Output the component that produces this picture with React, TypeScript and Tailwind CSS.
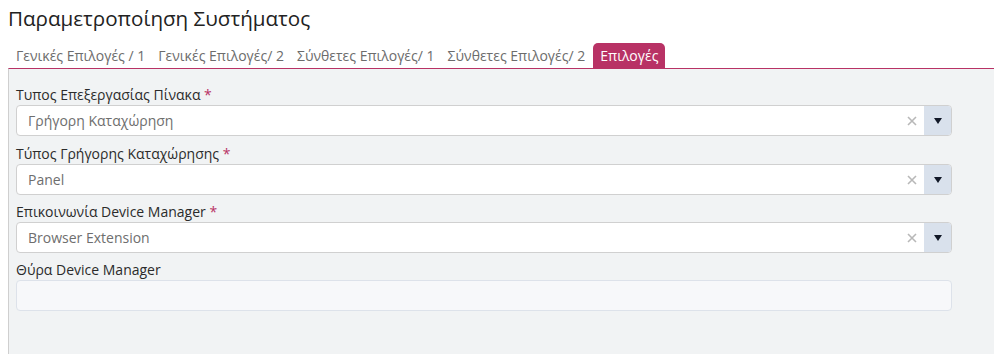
import React from "react";

const tabs = ["Γενικές Επιλογές / 1", "Γενικές Επιλογές/ 2", "Σύνθετες Επιλογές/ 1", "Σύνθετες Επιλογές/ 2"];

function Select({ value }: { value: string }) {
  return (
    <div className="flex h-[31px] w-[936px] items-stretch overflow-hidden rounded-[4px] border border-[#d0d0d0] bg-white">
      <div className="flex flex-1 items-center pl-[11px] text-[14px] text-[#6e6e6e]">{value}</div>
      <div className="flex w-[24px] items-center justify-center text-[#b5b5b5]">
        <svg width="10" height="10" viewBox="0 0 10 10">
          <path d="M1 1L9 9M9 1L1 9" stroke="#b8b8b8" strokeWidth="1.6" />
        </svg>
      </div>
      <div className="flex w-[27px] items-center justify-center bg-[#d9e1ec]">
        <svg width="8" height="6" viewBox="0 0 8 6">
          <path d="M0 0H8L4 6Z" fill="#111827" />
        </svg>
      </div>
    </div>
  );
}

function Label({ text, req }: { text: string; req?: boolean }) {
  return (
    <div className="h-[20px] text-[14px] leading-[20px] text-[#2b2b2b]">
      {text}
      {req && <span className="text-[#b83265]"> *</span>}
    </div>
  );
}

export default function App() {
  return (
    <div className="h-[354px] w-[994px] bg-white pl-[8px]" style={{ fontFamily: '"Open Sans", sans-serif' }}>
      <div className="h-[38px] pt-[2px] text-[20.6px] leading-[32px] text-[#222]">Παραμετροποίηση Συστήματος</div>
      <div className="flex h-[30px] items-end">
        <div className="flex h-[25px] items-center gap-[13px] pl-[8px] pr-[8px] text-[14px] text-[#6c6c6c]">
          {tabs.map((t) => (
            <span key={t}>{t}</span>
          ))}
        </div>
        <div className="flex h-[25px] items-center rounded-t-[5px] bg-[#b83265] px-[7px] text-[14px] text-white">Επιλογές</div>
      </div>
      <div className="h-[286px] border-l border-t border-l-[#cfcfcf] border-t-[#b83265] bg-[#f1f3f4] pl-[7px] pt-[16px]">
        <div className="flex flex-col">
          <Label text="Τυπος Επεξεργασίας Πίνακα" req />
          <Select value="Γρήγορη Καταχώρηση" />
          <div className="h-[8px]" />
          <Label text="Τύπος Γρήγορης Καταχώρησης" req />
          <Select value="Panel" />
          <div className="h-[7px]" />
          <Label text="Επικοινωνία Device Manager" req />
          <Select value="Browser Extension" />
          <div className="h-[7px]" />
          <Label text="Θύρα Device Manager" />
          <div className="h-[31px] w-[936px] rounded-[4px] border border-[#dde2ea] bg-[#f7f8fa]" />
        </div>
      </div>
    </div>
  );
}
